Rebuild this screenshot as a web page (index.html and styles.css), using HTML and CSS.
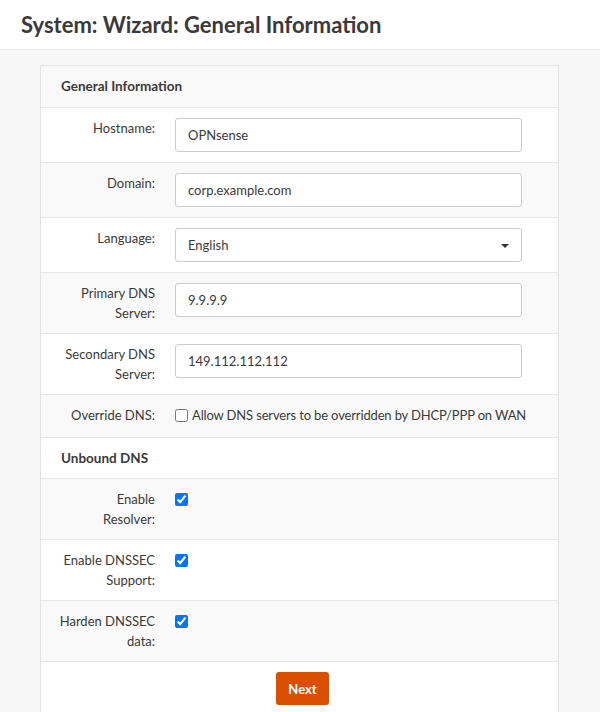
FILE: index.html
```html
<!DOCTYPE html>
<html lang="en">
<head>
<meta charset="utf-8">
<title>System: Wizard: General Information</title>
<link rel="stylesheet" href="styles.css">
</head>
<body>
<header class="page-header">
  <h1 class="page-title">System: Wizard: General Information</h1>
</header>
<main class="content">
  <section class="panel">
    <div class="section-head section-first stripe">General Information</div>

    <div class="row">
      <div class="label">Hostname:</div>
      <div class="field"><div class="input">OPNsense</div></div>
    </div>
    <div class="row stripe">
      <div class="label">Domain:</div>
      <div class="field"><div class="input">corp.example.com</div></div>
    </div>
    <div class="row">
      <div class="label">Language:</div>
      <div class="field"><div class="input select">English<span class="caret"></span></div></div>
    </div>
    <div class="row stripe">
      <div class="label">Primary DNS<br>Server:</div>
      <div class="field"><div class="input">9.9.9.9</div></div>
    </div>
    <div class="row">
      <div class="label">Secondary DNS<br>Server:</div>
      <div class="field"><div class="input">149.112.112.112</div></div>
    </div>
    <div class="row stripe row-check">
      <div class="label">Override DNS:</div>
      <div class="field">
        <label class="check-line"><input type="checkbox" class="check"><span>Allow DNS servers to be overridden by DHCP/PPP on WAN</span></label>
      </div>
    </div>

    <div class="section-head">Unbound DNS</div>

    <div class="row stripe">
      <div class="label">Enable<br>Resolver:</div>
      <div class="field"><input type="checkbox" class="check" checked></div>
    </div>
    <div class="row">
      <div class="label">Enable DNSSEC<br>Support:</div>
      <div class="field"><input type="checkbox" class="check" checked></div>
    </div>
    <div class="row stripe">
      <div class="label">Harden DNSSEC<br>data:</div>
      <div class="field"><input type="checkbox" class="check" checked></div>
    </div>

    <div class="actions">
      <button class="btn-next" type="button">Next</button>
    </div>
  </section>
</main>
</body>
</html>
```

FILE: styles.css
```css
* { box-sizing: border-box; }

html, body {
  margin: 0;
  padding: 0;
  background: #f7f7f7;
  font-family: Lato, "Open Sans", sans-serif;
  color: #363636;
  font-size: 13px;
}

.page-header {
  background: #fff;
  height: 50px;
  border-bottom: 1px solid #e6e6e6;
  padding: 0 21px;
  display: flex;
  align-items: center;
}

.page-title {
  margin: 0;
  font-size: 22px;
  font-weight: 700;
  color: #3a3a3a;
  letter-spacing: 0;
}

.content {
  padding: 15px 41px 0 40px;
}

.panel {
  background: #fff;
  border: 1px solid #e3e3e3;
  border-bottom: none;
}

.stripe { background: #f9f9f9; }

.section-head {
  height: 41px;
  line-height: 40px;
  padding-left: 20px;
  font-weight: 700;
  font-size: 13.5px;
  color: #3a3a3a;
  border-bottom: 1px solid #e8e8e8;
}

.section-first {
  height: 42px;
  line-height: 41px;
}

.row {
  display: flex;
  border-bottom: 1px solid #e8e8e8;
}

.label {
  width: 124px;
  flex: none;
  padding: 10px;
  text-align: right;
  line-height: 20px;
  color: #3a3a3a;
}

.field {
  flex: 1;
  padding: 10px 36px 10px 10px;
}

.input {
  position: relative;
  height: 34px;
  border: 1px solid #cccccc;
  border-radius: 3px;
  background: #fff;
  padding: 0 12px;
  line-height: 32px;
  font-size: 13px;
  color: #3a3a3a;
}

.caret {
  position: absolute;
  right: 12px;
  top: 15px;
  width: 0;
  height: 0;
  border-top: 4px solid #333;
  border-left: 4px solid transparent;
  border-right: 4px solid transparent;
}

.row-check .field { padding-bottom: 12px; }

.check {
  width: 13px;
  height: 13px;
  margin: 4px 0 0 0;
  vertical-align: top;
}

.check-line {
  display: flex;
  align-items: flex-start;
  gap: 4px;
  line-height: 20px;
  color: #3a3a3a;
  white-space: nowrap;
  letter-spacing: -0.15px;
}

.check-line .check { margin-top: 4px; flex: none; }

.actions {
  display: flex;
  justify-content: center;
  padding: 10px 0 10px 6px;
  border-bottom: 1px solid #e8e8e8;
}

.btn-next {
  height: 33px;
  padding: 0 12px;
  border: none;
  border-radius: 3px;
  background: #d94f00;
  color: #fff;
  font-family: Lato, "Open Sans", sans-serif;
  font-size: 13px;
  font-weight: 700;
}
```
